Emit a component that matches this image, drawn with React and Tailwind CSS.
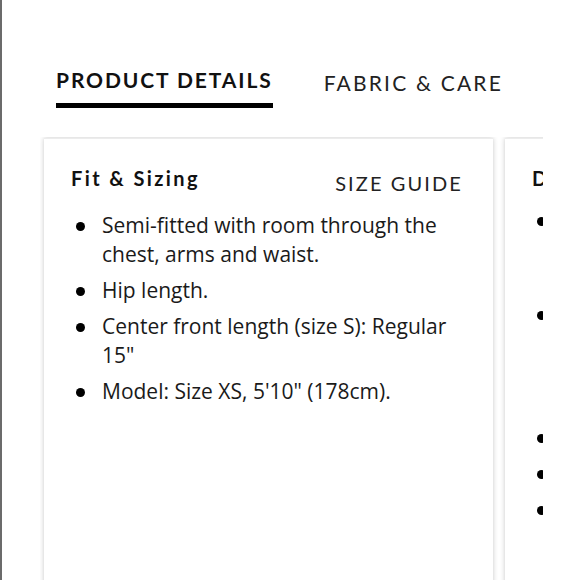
const fitItems = [
  'Semi-fitted with room through the chest, arms and waist.',
  'Hip length.',
  'Center front length (size S): Regular 15"',
  'Model: Size XS, 5\'10" (178cm).',
];

const detailItems = [
  'Soft, structured brushed cotton knit that holds its shape through every single wear and wash.',
  'Relaxed drop shoulders with ribbed cuffs, a ribbed hem and a clean crewneck, finished throughout with tonal contrast stitching details.',
  'Side pockets.',
  'Imported.',
  'Style #1204.',
];

function Card({ title, action, items }) {
  return (
    <div className="w-[449px] shrink-0 bg-white border-t border-[#ececec] shadow-[0_0_5px_rgba(0,0,0,0.22)] pl-[27px] pr-[26px] pt-[24px] pb-10 min-h-[480px]">
      <div className="flex items-start justify-between">
        <h3 className="text-[20px] font-bold tracking-[2.4px] text-[#111]">{title}</h3>
        <span className="mt-[5px] mr-[4px] text-[20px] tracking-[2.1px] text-[#222]">{action}</span>
      </div>
      <ul className="mt-[13px] flex flex-col gap-[7px] pl-[5px]">
        {items.map((item) => (
          <li key={item} className="flex gap-[17px] text-[21px] leading-[29px] text-[#1a1a1a] font-['Open_Sans',sans-serif]">
            <span className="mt-[11px] w-[9px] h-[9px] rounded-full bg-black shrink-0" />
            <span>{item}</span>
          </li>
        ))}
      </ul>
    </div>
  );
}

export default function App() {
  return (
    <div className="w-[580px] h-[580px] overflow-hidden bg-white border-l-2 border-[#6b6b6b] font-['Lato',sans-serif]">
      <div className="flex gap-[51px] pl-[54px] pt-[64px]">
        <button className="pb-[7px] border-b-[5px] border-black text-[21px] font-bold tracking-[1.9px] text-[#111]">
          PRODUCT DETAILS
        </button>
        <button className="pb-[7px] text-[21px] tracking-[2.2px] text-[#222]">FABRIC &amp; CARE</button>
      </div>
      <div className="mt-[29px] ml-[38px] w-[503px] overflow-hidden pl-[4px] pt-[1px]">
        <div className="flex gap-[12px]">
          <Card title="Fit & Sizing" action="SIZE GUIDE" items={fitItems} />
          <Card title="Details" items={detailItems} />
        </div>
      </div>
    </div>
  );
}
